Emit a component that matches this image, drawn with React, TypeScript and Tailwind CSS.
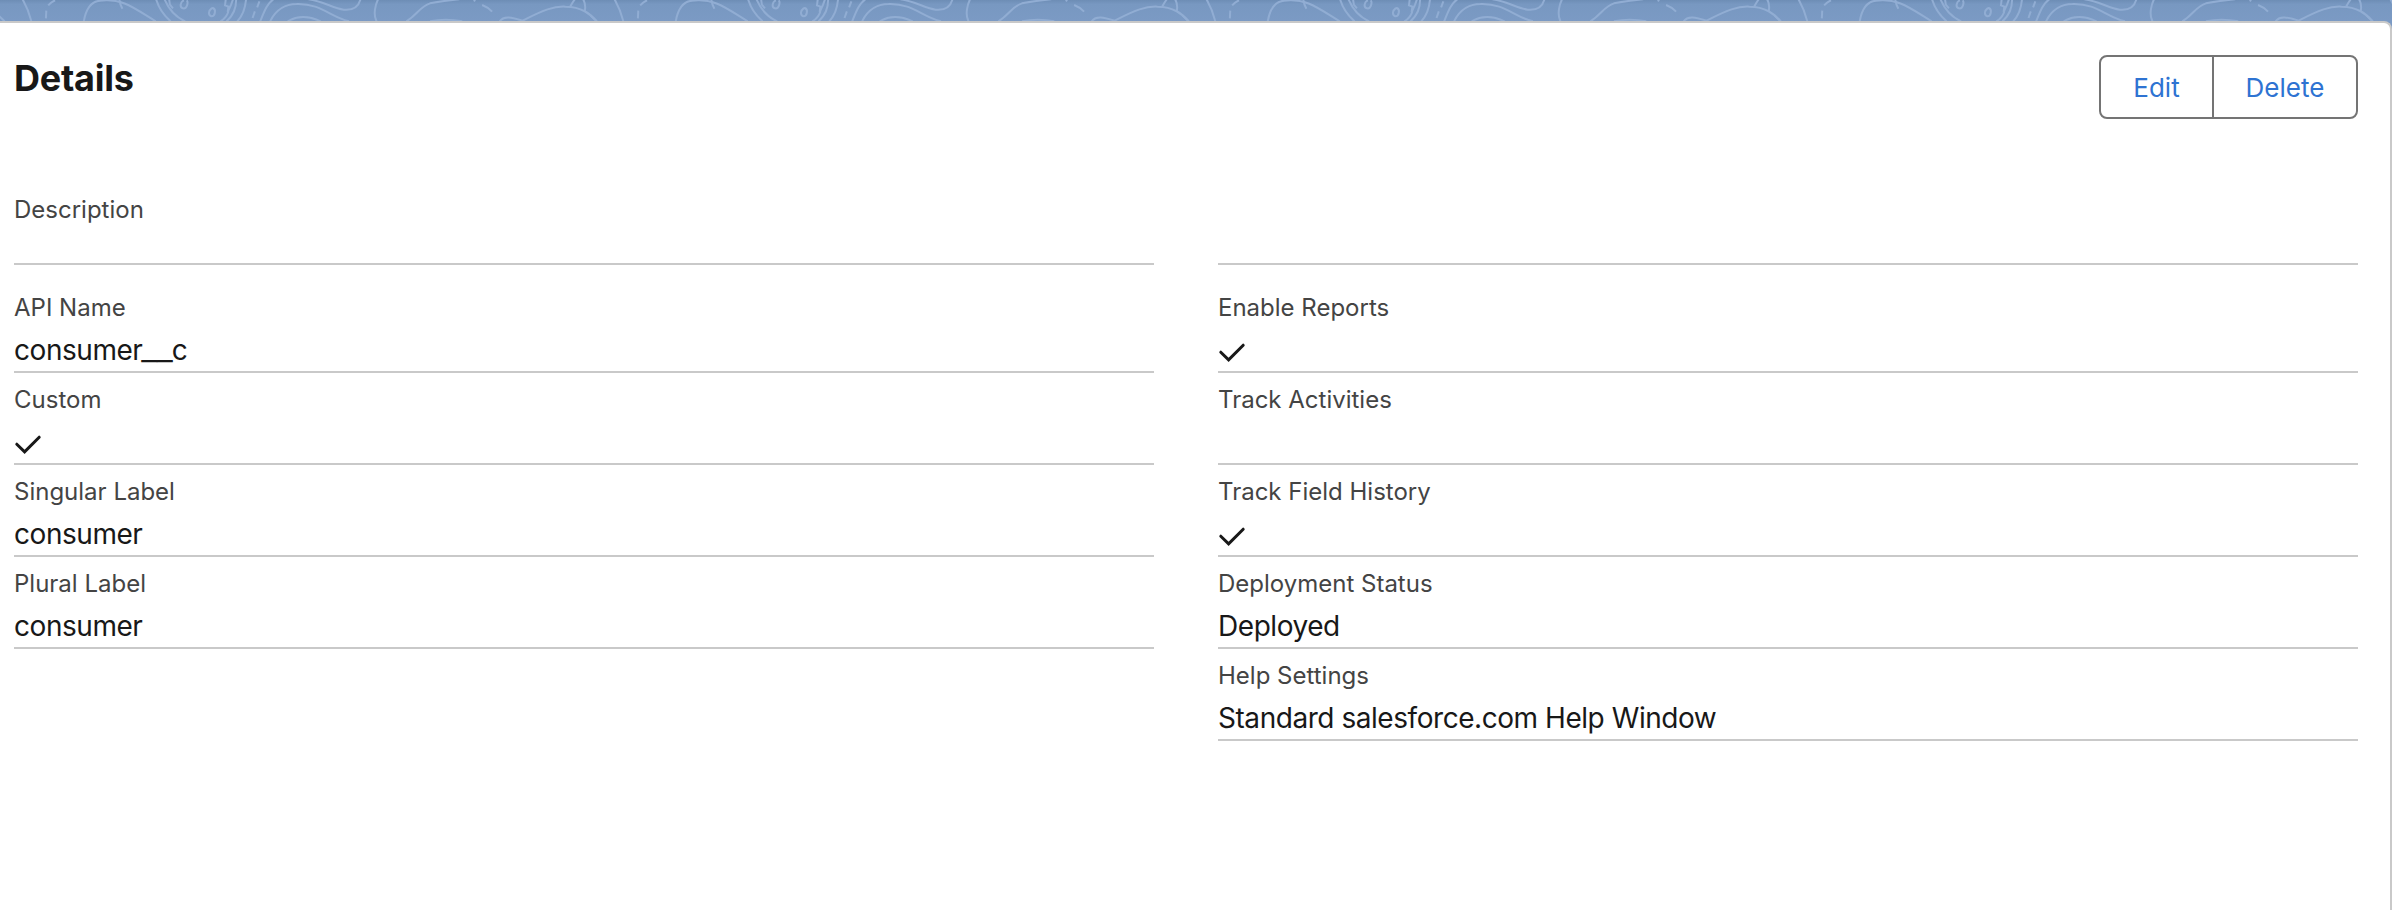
import React from "react";

const wave = [
  "M-4 46L12 64", "M59 -2Q75 30 82 64", "M144 1Q134 6 126 16", "M121 32L120 55",
  "M219 64C224 30 238 4 262 2C320 -6 350 24 407 64", "M312 -2Q313 12 320 26",
  "M408 -2Q418 36 446 64", "M430 -2Q448 46 484 64", "M442 -2L444 14L452 25",
  "M481 1C472 4 468 22 478 25C488 28 493 8 488 1", "M553 25C544 32 544 46 552 49C562 50 566 28 556 24Z",
  "M590 -2L588 16L597 20L595 36L604 14L609 -2", "M597 34Q592 54 576 64", "M617 -2Q618 38 592 64",
  "M643 -2Q640 40 620 64", "M678 4L672 22", "M666 34L660 54",
  "M680 64C692 30 698 12 714 -2", "M706 64C722 26 750 12 775 12C840 10 860 50 912 64",
  "M752 64Q790 38 838 64", "M806 -2C844 4 870 24 898 29C926 32 938 16 942 -2",
  "M988 -2C982 12 974 42 984 64", "M1062 64C1092 44 1096 20 1124 10Q1160 2 1200 -2",
  "M1124 64Q1164 54 1208 64", "M1238 0L1242 4", "M1260 15Q1276 22 1286 35",
  "M1306 64C1316 46 1338 52 1366 62C1420 30 1448 18 1478 20C1520 20 1542 42 1560 64",
  "M1490 20Q1498 4 1502 -2", "M1524 -2Q1532 14 1528 34",
];

function Banner() {
  return (
    <svg className="block h-full w-full" viewBox="0 0 6251 63" preserveAspectRatio="none" fill="none" stroke="#91add3" strokeWidth="2">
      <defs>
        <g id="wave">{wave.map((d) => <path key={d} d={d} vectorEffect="non-scaling-stroke" />)}</g>
      </defs>
      {[0, 1547, 3094, 4641, 6188].map((x) => <use key={x} href="#wave" x={x} />)}
    </svg>
  );
}

function Check() {
  return (
    <svg className="mt-[9px] block h-8 w-7" viewBox="0 0 28 32" fill="none" stroke="#181818" strokeWidth="3" strokeLinecap="round">
      <path d="M2.8 16.2L10.6 23.8L25.2 9.2" />
    </svg>
  );
}

type FieldProps = { label: string; value?: React.ReactNode; checked?: boolean };

function Field({ label, value, checked }: FieldProps) {
  return (
    <div className="h-[92px] border-b-2 border-[#c9c9c9]">
      <div className="flex h-[46px] items-center pt-2 text-[24px] leading-8 text-[#444444]">{label}</div>
      {checked ? <Check /> : <div className="pt-px text-[28px] leading-[44px] tracking-[-0.45px] text-[#181818]">{value}</div>}
    </div>
  );
}

export default function App() {
  return (
    <div className="flex h-[910px] w-full flex-col overflow-hidden bg-[#7b9ac4] font-['Inter','Liberation_Sans',sans-serif]">
      <div className="h-[21px] shrink-0 bg-linear-to-b from-[#6d8db5] via-[#7898c1] via-20% to-[#7b9ac4]">
        <Banner />
      </div>
      <main className="flex-1 rounded-tr-lg border-t-2 border-r-2 border-[#c9c9c9] bg-white pl-3.5 pr-8">
        <header className="flex h-[148px] items-start justify-between pt-8">
          <h2 className="pt-[3px] text-[36px] leading-10 font-bold tracking-[-0.25px] text-[#181818]">Details</h2>
          <div className="flex h-16 w-[259px] rounded-lg border-2 border-[#747474] text-[26px] text-[#2e73d2]">
            <button className="w-[113px] border-r-2 border-[#747474]">Edit</button>
            <button className="flex-1">Delete</button>
          </div>
        </header>
        <div className="grid grid-cols-2 gap-x-16">
          <div className="h-[94px] border-b-2 border-[#c9c9c9] pt-[23px] text-[24px] leading-8 text-[#444444]">Description</div>
          <div className="h-[94px] border-b-2 border-[#c9c9c9]" />
          <div className="pt-4">
            <Field
              label="API Name"
              value={<>consumer<span className="-mr-px -ml-px align-[2px] font-['Liberation_Sans',sans-serif] leading-none font-bold tracking-normal [text-shadow:0_1px_0_#181818]">__</span>c</>}
            />
            <Field label="Custom" checked />
            <Field label="Singular Label" value="consumer" />
            <Field label="Plural Label" value="consumer" />
          </div>
          <div className="pt-4">
            <Field label="Enable Reports" checked />
            <Field label="Track Activities" />
            <Field label="Track Field History" checked />
            <Field label="Deployment Status" value="Deployed" />
            <Field label="Help Settings" value="Standard salesforce.com Help Window" />
          </div>
        </div>
      </main>
    </div>
  );
}
